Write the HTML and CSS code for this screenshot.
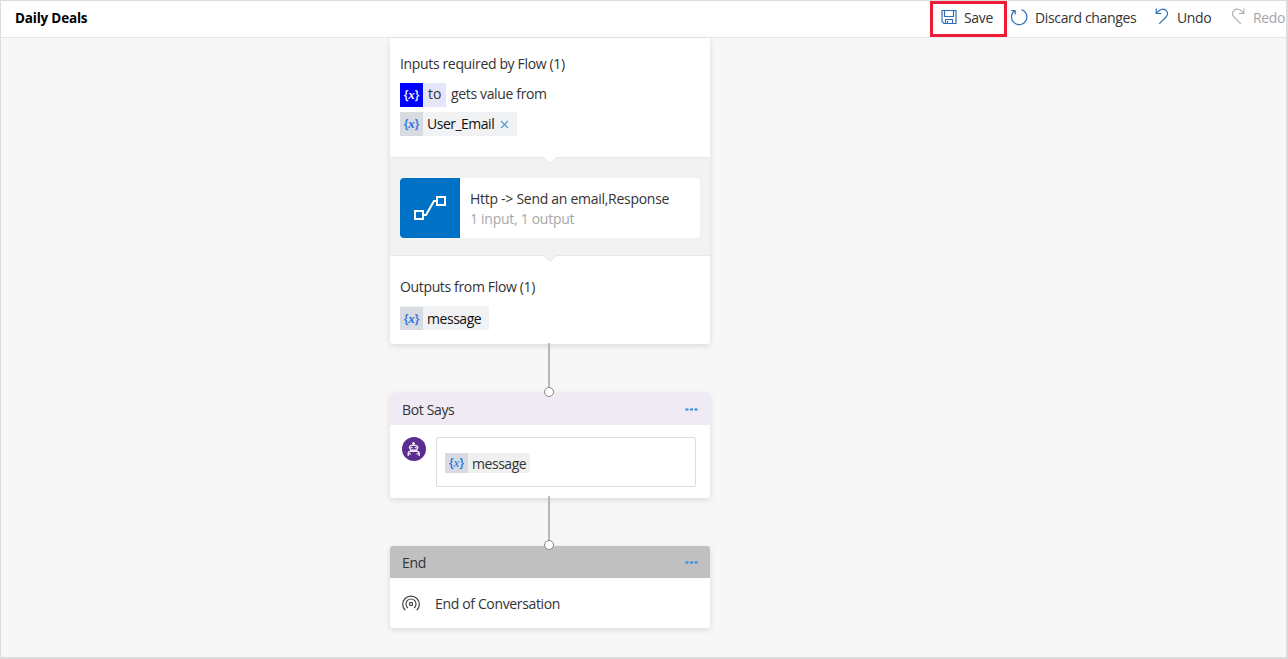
FILE: index.html
```html
<!DOCTYPE html>
<html lang="en">
<head>
<meta charset="utf-8">
<title>Daily Deals</title>
<link rel="stylesheet" href="styles.css">
</head>
<body>
<div class="app">
  <header class="topbar">
    <h1 class="title">Daily Deals</h1>
    <nav class="commands">
      <button class="cmd cmd-save">
        <svg width="16" height="16" viewBox="0 0 16 16"><path d="M1 1.500H15V14.500H3L1 12.500ZM3.500 1.500V7.500H12.500V1.500M4.500 14V10.500H11.500V14M6.500 12V14.500"/></svg>
        <span class="t-save">Save</span>
      </button>
      <button class="cmd cmd-discard">
        <svg width="18" height="18" viewBox="0 0 18 18"><path d="M11.500 1.600A7.700 7.700 0 1 1 4.300 3M1.300 2.500H5.200V6.500"/></svg>
        <span class="t-discard">Discard changes</span>
      </button>
      <button class="cmd cmd-undo">
        <svg width="14" height="17" viewBox="0 0 14 17"><path d="M1.200 .5V5.500H6.200M1.500 5.200L4.200 2.500Q7.500-.3 10.800 2.200Q14.200 5.700 11 9L4.200 15.800"/></svg>
        <span class="t-undo">Undo</span>
      </button>
      <button class="cmd cmd-redo">
        <svg width="14" height="17" viewBox="0 0 14 17"><path d="M12.800 .5V5.500H7.800M12.500 5.200L9.800 2.500Q6.500-.3 3.200 2.200Q-.2 5.700 3 9L9.800 15.800"/></svg>
        <span class="t-redo">Redo</span>
      </button>
    </nav>
  </header>
  <main class="canvas">
    <section class="card flow">
      <div class="inputs">
        <p class="label"><span class="t-inputs">Inputs required by Flow (1)</span></p>
        <div class="row">
          <span class="token token-to"><i class="var">{<em>x</em>}</i><span class="t-to">to</span></span>
          <span class="t-gets">gets value from</span>
        </div>
        <div class="row"><span class="token token-email"><i class="var">{<em>x</em>}</i><span class="t-email">User_Email</span>
          <svg class="close" width="9" height="9" viewBox="0 0 9 9"><path d="M1 1L8 8M8 1L1 8"/></svg></span></div>
      </div>
      <div class="action">
        <svg class="notch" width="16" height="8" viewBox="0 0 16 8"><path class="notch-white" d="M0 0H1L8 6.500L15 0H16"/></svg>
        <div class="action-card">
          <div class="action-icon"><svg width="34" height="28" viewBox="0 0 34 28"><path d="M2 16H10V24H2ZM24 2H32V10H24ZM10 20H13L21 6H24"/></svg></div>
          <div class="action-text">
            <span class="t-http">Http -&gt; Send an email,Response</span>
            <span class="t-io">1 input, 1 output</span>
          </div>
        </div>
      </div>
      <div class="outputs">
        <svg class="notch" width="16" height="8" viewBox="0 0 16 8"><path class="notch-gray" d="M0 0H1L8 6.500L15 0H16"/></svg>
        <p class="label"><span class="t-outputs">Outputs from Flow (1)</span></p>
        <span class="token token-out"><i class="var">{<em>x</em>}</i><span class="t-message">message</span></span>
      </div>
    </section>
    <div class="link link-first"></div>
    <section class="card bot">
      <div class="card-head"><span class="t-bot">Bot Says</span>
        <svg class="more" width="13" height="3" viewBox="0 0 13 3"><path d="M.5 .5h3v2h-3ZM5 .5h3v2H5ZM9.500 .5h3v2h-3Z"/></svg></div>
      <div class="bot-body">
        <svg width="24" height="24" viewBox="0 0 24 24"><circle cx="12" cy="12" r="12" fill="#5c2d91"/><g fill="none" stroke="#f3edf8" stroke-width="1.300"><path d="M11.500 5V8M10 6.500H13M7.500 10.500C7.500 7.200 15.800 7.200 15.800 10.500L14.500 13.200H8.800ZM6.200 19V16.500Q6.200 14.300 8.200 14.300H15.200Q17.200 14.300 17.200 16.500V19M6 16.800H9M14.500 16.800H17.500"/><path d="M8.500 10.600H10.500M12.700 10.600H14.700"/></g></svg>
        <div class="message-box"><span class="token token-msg"><i class="var">{<em>x</em>}</i><span class="t-message">message</span></span></div>
      </div>
    </section>
    <div class="link link-second"></div>
    <section class="card end">
      <div class="card-head"><span class="t-end">End</span>
        <svg class="more" width="13" height="3" viewBox="0 0 13 3"><path d="M.5 .5h3v2h-3ZM5 .5h3v2H5ZM9.500 .5h3v2h-3Z"/></svg></div>
      <div class="end-body">
        <svg width="18" height="17" viewBox="0 0 18 17"><circle cx="9" cy="9" r="1.600"/><path d="M6 13A5 5 0 1 1 12 13M3.200 15.300A8.300 8.300 0 1 1 14.800 15.300"/></svg>
        <span class="t-conv">End of Conversation</span>
      </div>
    </section>
  </main>
</div>
</body>
</html>
```

FILE: styles.css
```css
*, ::after { box-sizing: border-box; }
body { margin: 0; font: 14px/20px "Open Sans", "Noto Sans", sans-serif; color: #333; letter-spacing: -.35px; }
span { white-space: nowrap; }
.app { height: 659px; border: solid #dcdcdc; border-width: 1px 2px 2px 1px; overflow: hidden; display: flex; flex-direction: column; background: #f7f7f7; }
.topbar { flex: none; height: 37px; background: #fff; border-bottom: 1px solid #e6e6e6; display: flex; justify-content: space-between; }
.title { margin: 7px 0 0 14px; font: 700 13.500px/20px "Open Sans", sans-serif; color: #000; letter-spacing: -.2px; }
.commands { display: flex; width: 356px; }
.cmd { flex: none; display: flex; border: 0; padding: 0; margin: 0; background: none; font: inherit; letter-spacing: inherit; color: #333; }
.cmd svg { fill: none; stroke: #2f6fb9; stroke-width: 1.200; flex: none; }
.cmd > span { margin-top: 7px; }
.cmd-save { width: 77px; height: 36px; border: 3px solid #ed1b36; padding-left: 8px; gap: 7px; }
.cmd-save svg { margin-top: 5px; }
.cmd-save > span { margin-top: 4px; }
.cmd-discard { width: 147px; padding-left: 3px; gap: 7px; }
.cmd-discard svg { margin-top: 7px; }
.cmd-undo { width: 77px; padding-left: 1px; gap: 8px; }
.cmd-undo svg, .cmd-redo svg { margin-top: 7px; }
.cmd-redo { gap: 8px; color: #a6a6a6; }
.cmd-redo svg { stroke: #b0b0b0; }
.canvas { flex: 1; padding-left: 389px; min-height: 0; }
.card { width: 320px; background: #fff; border-radius: 3px; box-shadow: 0 2px 6px rgba(0,0,0,.12); }
.flow { height: 306px; border-radius: 0 0 3px 3px; }
.inputs { height: 119px; padding: 16px 10px 0; }
.label { margin: 0; height: 20px; }
.row { display: flex; align-items: center; gap: 5px; height: 24px; margin-top: 9px; }
.row + .row { margin-top: 5px; }
.t-gets { padding-bottom: 2px; }
.token { display: inline-flex; align-items: center; height: 24px; background: #f1f2f4; color: #111; }
.var { width: 23px; height: 100%; flex: none; display: flex; align-items: center; justify-content: center; background: #d8dbe1; color: #216fe5; font: 600 12px/22px "Open Sans", sans-serif; letter-spacing: 0; }
.var em { font: italic bold 13px "Liberation Serif", serif; }
.token > span { margin-left: 4px; }
.token-to { width: 46px; background: #e5e5fa; color: #333; }
.token-to .var { background: #00f; color: #fff; }
.token-to > span { margin-left: 5px; letter-spacing: 0; padding-bottom: 2px; }
.token-email { width: 117px; }
.t-email { letter-spacing: -.5px; }
.close { margin-left: 6px; fill: none; stroke: #4a9cdb; stroke-width: 1.100; }
.action { position: relative; height: 98px; background: #f2f2f2; border-top: 1px solid #e8e8e8; padding: 20px 10px; }
.notch { position: absolute; top: -1px; left: 152px; stroke: #e6e6e6; }
.notch-white { fill: #fff; }
.notch-gray { fill: #f2f2f2; }
.action-card { display: flex; height: 60px; background: #fff; border-radius: 4px; overflow: hidden; }
.action-icon { width: 60px; background: #0072c6; display: grid; place-items: center; }
.action-icon svg { fill: none; stroke: #fff; stroke-width: 2; margin-top: 2px; }
.action-text { display: flex; flex-direction: column; padding: 11px 0 0 10px; letter-spacing: -.28px; }
.t-io { color: #a8a8a8; }
.outputs { position: relative; height: 89px; padding: 21px 10px 0; border-top: 1px solid #e8e8e8; }
.token-out { width: 89px; margin-top: 9px; border-top: 1px solid #f1f2f4; }
.t-message { letter-spacing: -.45px; }
.link { position: relative; width: 2px; margin-left: 158px; background: #b9b9b9; z-index: 1; }
.link::after { content: ""; position: absolute; width: 10px; height: 10px; left: -4px; bottom: -5px; border: 1px solid #888; border-radius: 50%; background: #fff; }
.link-first { height: 49px; margin-top: -1px; }
.link-second { height: 49px; margin-top: -2px; }
.card-head { height: 32px; padding: 0 12px; display: flex; align-items: center; justify-content: space-between; border-radius: 3px 3px 0 0; }
.card-head span { padding-top: 2px; }
.more { fill: #2b88d8; }
.bot { height: 105px; margin-top: 1px; }
.bot .card-head { background: #efeaf4; }
.bot-body { display: flex; padding: 12px 12px 0; gap: 10px; }
.message-box { width: 260px; height: 50px; border: 1px solid #dedede; border-radius: 2px; padding: 15px 8px; }
.token-msg { display: flex; width: 85px; height: 20px; background: #f0f0f0; color: #333; border-radius: 2px; }
.token-msg .var { width: 23px; }
.token-msg > span { padding-top: 2px; }
.token-msg em { font-weight: normal; }
.end { height: 82px; margin-top: 1px; }
.end .card-head { background: #c0c0c0; }
.end-body { height: 50px; display: flex; align-items: center; padding: 2px 12px 0; gap: 15px; }
.end-body svg { fill: none; stroke: #444; stroke-width: 1.200; margin-bottom: 2px; }
```
